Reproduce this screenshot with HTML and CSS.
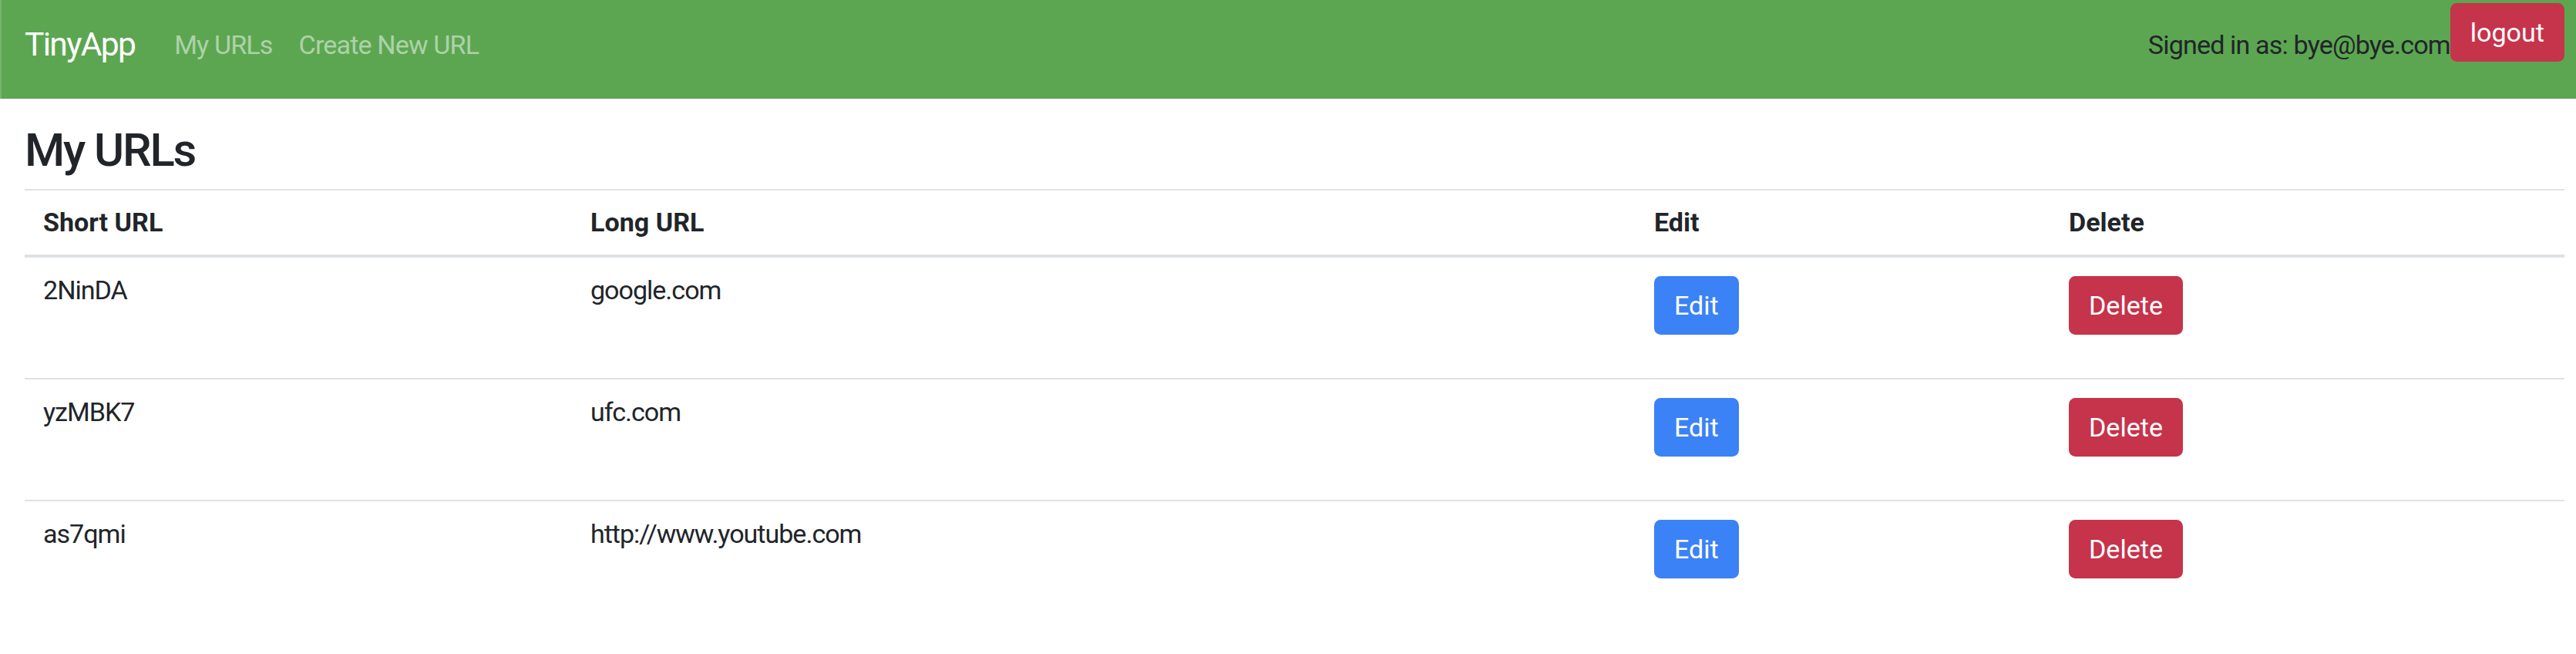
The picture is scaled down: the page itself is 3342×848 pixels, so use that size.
FILE: index.html
```html
<!DOCTYPE html>
<html lang="en">
<head>
<meta charset="utf-8">
<title>TinyApp - My URLs</title>
<link rel="stylesheet" href="styles.css">
</head>
<body>
<nav class="navbar">
  <a class="brand" href="#">TinyApp</a>
  <div class="nav-links">
    <a class="nav-link" href="#">My URLs</a>
    <a class="nav-link" href="#">Create New URL</a>
  </div>
  <div class="nav-right">
    <span class="signed-in">Signed in as: bye@bye.com</span>
    <form class="logout-form">
      <button type="button" class="btn btn-danger">logout</button>
    </form>
  </div>
</nav>
<main class="container">
  <h3 class="page-title">My URLs</h3>
  <table class="url-table">
    <colgroup>
      <col class="col-short">
      <col class="col-long">
      <col class="col-edit">
      <col class="col-delete">
    </colgroup>
    <thead>
      <tr>
        <th>Short URL</th>
        <th>Long URL</th>
        <th>Edit</th>
        <th>Delete</th>
      </tr>
    </thead>
    <tbody>
      <tr>
        <td>2NinDA</td>
        <td>google.com</td>
        <td><form class="row-form"><button type="button" class="btn btn-primary">Edit</button></form></td>
        <td><form class="row-form"><button type="button" class="btn btn-danger">Delete</button></form></td>
      </tr>
      <tr>
        <td>yzMBK7</td>
        <td>ufc.com</td>
        <td><form class="row-form"><button type="button" class="btn btn-primary">Edit</button></form></td>
        <td><form class="row-form"><button type="button" class="btn btn-danger">Delete</button></form></td>
      </tr>
      <tr>
        <td>as7qmi</td>
        <td>http://www.youtube.com</td>
        <td><form class="row-form"><button type="button" class="btn btn-primary">Edit</button></form></td>
        <td><form class="row-form"><button type="button" class="btn btn-danger">Delete</button></form></td>
      </tr>
    </tbody>
  </table>
</main>
</body>
</html>
```
FILE: styles.css
```css
* { box-sizing: border-box; }

html, body {
  margin: 0;
  padding: 0;
  background: #ffffff;
}

body {
  font-family: Roboto, "Liberation Sans", Arial, sans-serif;
  font-size: 34.1px;
  color: #212529;
}

a { text-decoration: none; }

/* ---------- navbar ---------- */
.navbar {
  display: flex;
  align-items: flex-start;
  height: 128px;
  padding: 0 15px 0 32px;
  background: #5ca651;
  box-shadow: inset 2px 0 0 #78b36f;
}

.brand {
  margin-top: 36px;
  margin-right: 34px;
  font-size: 42.6px;
  line-height: 42.6px;
  letter-spacing: -0.04em;
  color: #ffffff;
}

.nav-links {
  display: flex;
}

.nav-link {
  margin-top: 41px;
  padding: 0 17px;
  font-size: 34.1px;
  line-height: 34px;
  letter-spacing: -0.025em;
  color: rgba(255, 255, 255, 0.5);
}

.nav-right {
  display: flex;
  align-items: flex-start;
  margin-left: auto;
}

.signed-in {
  margin-top: 41px;
  font-size: 34.1px;
  line-height: 34px;
  letter-spacing: -0.025em;
  color: #212529;
}

.logout-form {
  margin: 4px 0 0 0;
}

/* ---------- buttons ---------- */
.btn {
  display: inline-block;
  height: 76px;
  padding: 0 24px;
  border: 2px solid transparent;
  border-radius: 8.5px;
  font-family: inherit;
  font-size: 34.1px;
  line-height: 72px;
  letter-spacing: 0;
  color: #ffffff;
  cursor: pointer;
}

.btn-primary {
  background: #3b82f6;
  border-color: #3b82f6;
}

.btn-danger {
  background: #c5344b;
  border-color: #c5344b;
}

/* ---------- content ---------- */
.container {
  padding: 31px 15px 0 32px;
}

.page-title {
  margin: 0 0 14px 0;
  font-size: 59.7px;
  line-height: 72px;
  font-weight: 500;
  letter-spacing: -0.035em;
  color: #212529;
}

.url-table {
  width: 100%;
  table-layout: fixed;
  border-collapse: separate;
  border-spacing: 0;
  color: #212529;
}

.col-short { width: 710px; }
.col-long { width: 1380px; }
.col-edit { width: 538px; }
.col-delete { width: 667px; }

.url-table th {
  padding: 24px 24px 25px 24px;
  border-top: 2px solid #dee2e6;
  border-bottom: 4px solid #dee2e6;
  font-weight: 700;
  line-height: 34px;
  text-align: left;
}

.url-table td {
  padding: 24px 24px 22px 24px;
  line-height: 37px;
  letter-spacing: -0.03em;
  vertical-align: top;
}

.url-table tbody tr + tr td {
  border-top: 2px solid #dee2e6;
}

.row-form {
  margin: 0 0 34px 0;
}
```
